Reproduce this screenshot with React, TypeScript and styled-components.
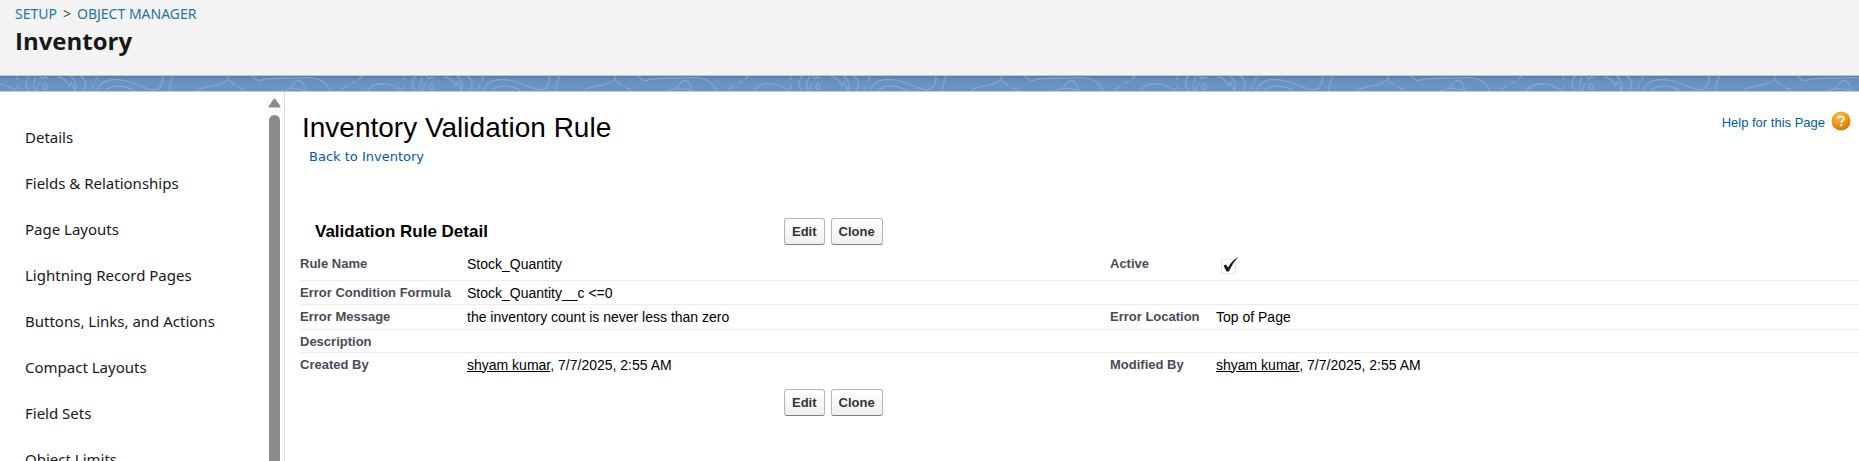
import React from 'react';
import styled, { createGlobalStyle } from 'styled-components';

const Global = createGlobalStyle`
  * { box-sizing: border-box; }
  body { margin: 0; background: #fff; color: #000; font-family: "Liberation Sans", Arial, sans-serif; font-size: 14px; }
  a { text-decoration: none; }
  h1, h2, h3 { margin: 0; }
`;

const Page = styled.div`
  display: flex;
  flex-direction: column;
  height: 100vh;
  overflow: hidden;
`;

const Header = styled.header`
  padding: 4px 15px 17px;
  background: #f3f3f3;
  border-bottom: 1px solid #c4c6c4;
  font-family: "Open Sans", "Noto Sans", sans-serif;
`;

const Breadcrumbs = styled.nav`
  display: flex;
  gap: 6px;
  color: #444;
  font: 14px/20px "Noto Sans", "Open Sans", sans-serif;
`;

const Crumb = styled.a`
  color: #2574a9;
`;

const ObjectName = styled.h1`
  color: #181818;
  font-size: 24px;
  line-height: 34px;
  font-weight: 700;
`;

const Band = styled.div`
  flex: none;
  border-bottom: 1px solid #c3cbd6;
  background: linear-gradient(#5580ad, #6790be 30%, #6d96c5);
`;

const BandArt = styled.svg`
  display: block;
  width: 100%;
  height: 15px;
`;

const Body = styled.div`
  display: flex;
  flex: 1;
  min-height: 0;
`;

const Sidebar = styled.aside`
  display: flex;
  flex: none;
  width: 285px;
  border-right: 1px solid #dddbda;
  overflow: hidden;
`;

const Menu = styled.ul`
  flex: 1;
  margin: 0;
  padding: 22px 0 0 25px;
  list-style: none;
`;

const MenuLink = styled.a`
  display: block;
  padding: 12px 0;
  color: #181818;
  font: 15px/22px "Noto Sans", "Open Sans", sans-serif;
`;

const ScrollTrack = styled.div`
  display: flex;
  flex-direction: column;
  align-items: center;
  gap: 7px;
  width: 19px;
  padding-top: 6px;
  background: #fcfcfc;
`;

const ScrollThumb = styled.div`
  flex: 1;
  width: 11px;
  border-radius: 6px 6px 0 0;
  background: #8b8b8b;
`;

const Main = styled.main`
  flex: 1;
  min-width: 0;
  padding: 19px 0 0 15px;
`;

const TitleBar = styled.div`
  display: flex;
  align-items: flex-start;
  justify-content: space-between;
  padding-right: 8px;
`;

const Title = styled.h2`
  padding-left: 2px;
  font-size: 28px;
  line-height: 34px;
  font-weight: 400;
`;

const BackLink = styled.a`
  display: inline-block;
  padding-left: 9px;
  color: #015ba7;
  font: 13px/24px "DejaVu Sans", Verdana, sans-serif;
`;

const HelpLink = styled.a`
  display: flex;
  align-items: flex-start;
  gap: 6px;
  color: #015ba7;
  font-size: 13px;
  line-height: 24px;
`;

const ActionBar = styled.div<{ $top?: boolean }>`
  display: flex;
  align-items: center;
  padding-top: ${(p) => (p.$top ? 49 : 7)}px;
  padding-left: ${(p) => (p.$top ? 0 : 484)}px;
`;

const SectionTitle = styled.h3`
  width: 484px;
  padding-left: 15px;
  font-size: 17px;
  line-height: 20px;
  font-weight: 700;
`;

const Buttons = styled.div`
  display: flex;
  gap: 6px;
`;

const ActionButton = styled.button`
  height: 27px;
  padding: 0 7px;
  border: 1px solid #b5b5b5;
  border-bottom-color: #7f7f7f;
  border-radius: 3px;
  background: linear-gradient(#fff, #f0f0f0);
  color: #333;
  font: 700 13px/24px "Liberation Sans", Arial, sans-serif;
`;

const DetailTable = styled.table`
  width: 100%;
  margin-top: 7px;
  border-collapse: collapse;
  table-layout: fixed;
`;

const LabelColumn = styled.col<{ $width: number }>`
  width: ${(p) => p.$width}px;
`;

const Row = styled.tr<{ $height: number; $last?: boolean }>`
  height: ${(p) => p.$height}px;
  border-bottom: ${(p) => (p.$last ? 'none' : '1px solid #ececec')};
`;

const Label = styled.th`
  padding: 3px 0 0;
  color: #4a4a56;
  font-size: 13px;
  line-height: 17px;
  font-weight: 700;
  text-align: left;
  vertical-align: top;
`;

const Value = styled.td`
  padding: 4px 0 0;
  font-size: 14px;
  line-height: 17px;
  vertical-align: top;
`;

const UserLink = styled.a`
  color: #000;
  text-decoration: underline;
`;

const CheckMark = styled.svg`
  display: block;
  margin-left: 4px;
`;

const menu = ['Details', 'Fields & Relationships', 'Page Layouts', 'Lightning Record Pages', 'Buttons, Links, and Actions', 'Compact Layouts', 'Field Sets', 'Object Limits'];

const Actions = () => (
  <Buttons>
    <ActionButton type="button">Edit</ActionButton>
    <ActionButton type="button">Clone</ActionButton>
  </Buttons>
);

const Stamp = () => (
  <><UserLink href="#user">shyam kumar</UserLink>, 7/7/2025, 2:55 AM</>
);

const Checked = () => (
  <CheckMark width="20" height="18" viewBox="0 0 20 18" role="img" aria-label="Checked">
    <rect x="1.5" y="3.5" width="14" height="14" fill="none" stroke="#c8c8c8" strokeDasharray="1 1" />
    <path d="M3.5 9.5 L6 8.5 L8 11.5 Q12 4 18.8 1 Q13 6 9 15.5 L6.5 15.5 Z" fill="#1c1c1c" />
  </CheckMark>
);

/* Repeating contour-map lines of the page background */
const Contours = () => (
  <BandArt aria-hidden="true">
    <defs>
      <pattern id="contours" width="386.5" height="15" patternUnits="userSpaceOnUse">
        <g fill="none" stroke="#86a9d1" strokeWidth="1.1" strokeLinecap="round" strokeLinejoin="round">
          <path d="M0 8 Q10 10 16 15 M17.5 1 V4 M18 9 V13" />
          <path d="M29 0 Q23 7 29 15 M36 1 Q32 9 35 15 M37 15 Q36 8 40 8 M40 0 L42 3 L45 1 L48 2" />
          <ellipse cx="45" cy="11" rx="2" ry="3" />
          <path d="M58 1 Q63 1 66 5 L69 10 L71 6 L74 13 L76 10 M71 0 Q78 7 75 15 M81 0 Q89 7 83 15" />
          <path d="M97 1 L95 5 M93 9 L92 13" />
          <path d="M97 15 C101 3 112 3 122 4 C138 7 146 14 154 14 C162 13 163 5 163 0" />
          <path d="M105 15 C110 8 126 9 134 15 M173 0 Q170 7 169 15" />
          <path d="M198 15 C203 9 212 11 220 8 Q229 5 229 0 M229 5 L235 9 M239 11 L245 15" />
          <path d="M252 0 Q257 6 261 4 C272 1 292 3 308 1.5 C320 2 327 6 330 15" />
          <path d="M281 15 Q292 10 307 15 M290 12 Q296 3 300 4.5 Q304 7 305 15" />
          <path d="M343 13 L347 10 M352 7 L356 5 M359 3 L362 0 M367 15 C372 7 380 7 386.5 8" />
        </g>
      </pattern>
    </defs>
    <rect width="100%" height="15" fill="url(#contours)" />
  </BandArt>
);

const HelpIcon = () => (
  <svg width="20" height="20" viewBox="0 0 20 20" aria-hidden="true">
    <defs>
      <radialGradient id="amber" cx="40%" cy="25%" r="75%">
        <stop offset="0" stopColor="#f8bd55" />
        <stop offset="0.6" stopColor="#ea9714" />
        <stop offset="1" stopColor="#c47a0c" />
      </radialGradient>
    </defs>
    <circle cx="10" cy="10" r="9.5" fill="url(#amber)" />
    <path d="M7.2 7.8 C7.2 4.6 12.9 4.6 12.9 7.7 C12.9 9.7 10.2 9.5 10.2 11.8" fill="none" stroke="#fff3d8" strokeWidth="1.9" />
    <circle cx="10.2" cy="14.3" r="1.2" fill="#fff3d8" />
  </svg>
);

export default function App() {
  return (
    <Page>
      <Global />
      <Header>
        <Breadcrumbs aria-label="Breadcrumb">
          <Crumb href="#setup">SETUP</Crumb>
          <span>&gt;</span>
          <Crumb href="#objects">OBJECT MANAGER</Crumb>
        </Breadcrumbs>
        <ObjectName>Inventory</ObjectName>
      </Header>
      <Band><Contours /></Band>
      <Body>
        <Sidebar>
          <Menu>
            {menu.map((m) => (
              <li key={m}><MenuLink href="#section">{m}</MenuLink></li>
            ))}
          </Menu>
          <ScrollTrack>
            <svg width="13" height="10" viewBox="0 0 13 10" aria-hidden="true"><path d="M6.5 1.5 L11.5 8.5 H1.5 Z" fill="#8b8b8b" stroke="#8b8b8b" strokeWidth="2" strokeLinejoin="round" /></svg>
            <ScrollThumb />
          </ScrollTrack>
        </Sidebar>
        <Main>
          <TitleBar>
            <div>
              <Title>Inventory Validation Rule</Title>
              <BackLink href="#back">Back to Inventory</BackLink>
            </div>
            <HelpLink href="#help">
              Help for this Page
              <HelpIcon />
            </HelpLink>
          </TitleBar>
          <ActionBar $top>
            <SectionTitle>Validation Rule Detail</SectionTitle>
            <Actions />
          </ActionBar>
          <DetailTable>
            <colgroup>
              <LabelColumn $width={167} />
              <col />
              <LabelColumn $width={106} />
              <col />
            </colgroup>
            <tbody>
              <Row $height={28}>
                <Label scope="row">Rule Name</Label>
                <Value>Stock_Quantity</Value>
                <Label scope="row">Active</Label>
                <Value><Checked /></Value>
              </Row>
              <Row $height={24}>
                <Label scope="row">Error Condition Formula</Label>
                <Value colSpan={3}>Stock_Quantity__c &lt;=0</Value>
              </Row>
              <Row $height={25}>
                <Label scope="row">Error Message</Label>
                <Value>the inventory count is never less than zero</Value>
                <Label scope="row">Error Location</Label>
                <Value>Top of Page</Value>
              </Row>
              <Row $height={23}>
                <Label scope="row">Description</Label>
                <Value colSpan={3} />
              </Row>
              <Row $height={30} $last>
                <Label scope="row">Created By</Label>
                <Value><Stamp /></Value>
                <Label scope="row">Modified By</Label>
                <Value><Stamp /></Value>
              </Row>
            </tbody>
          </DetailTable>
          <ActionBar><Actions /></ActionBar>
        </Main>
      </Body>
    </Page>
  );
}
